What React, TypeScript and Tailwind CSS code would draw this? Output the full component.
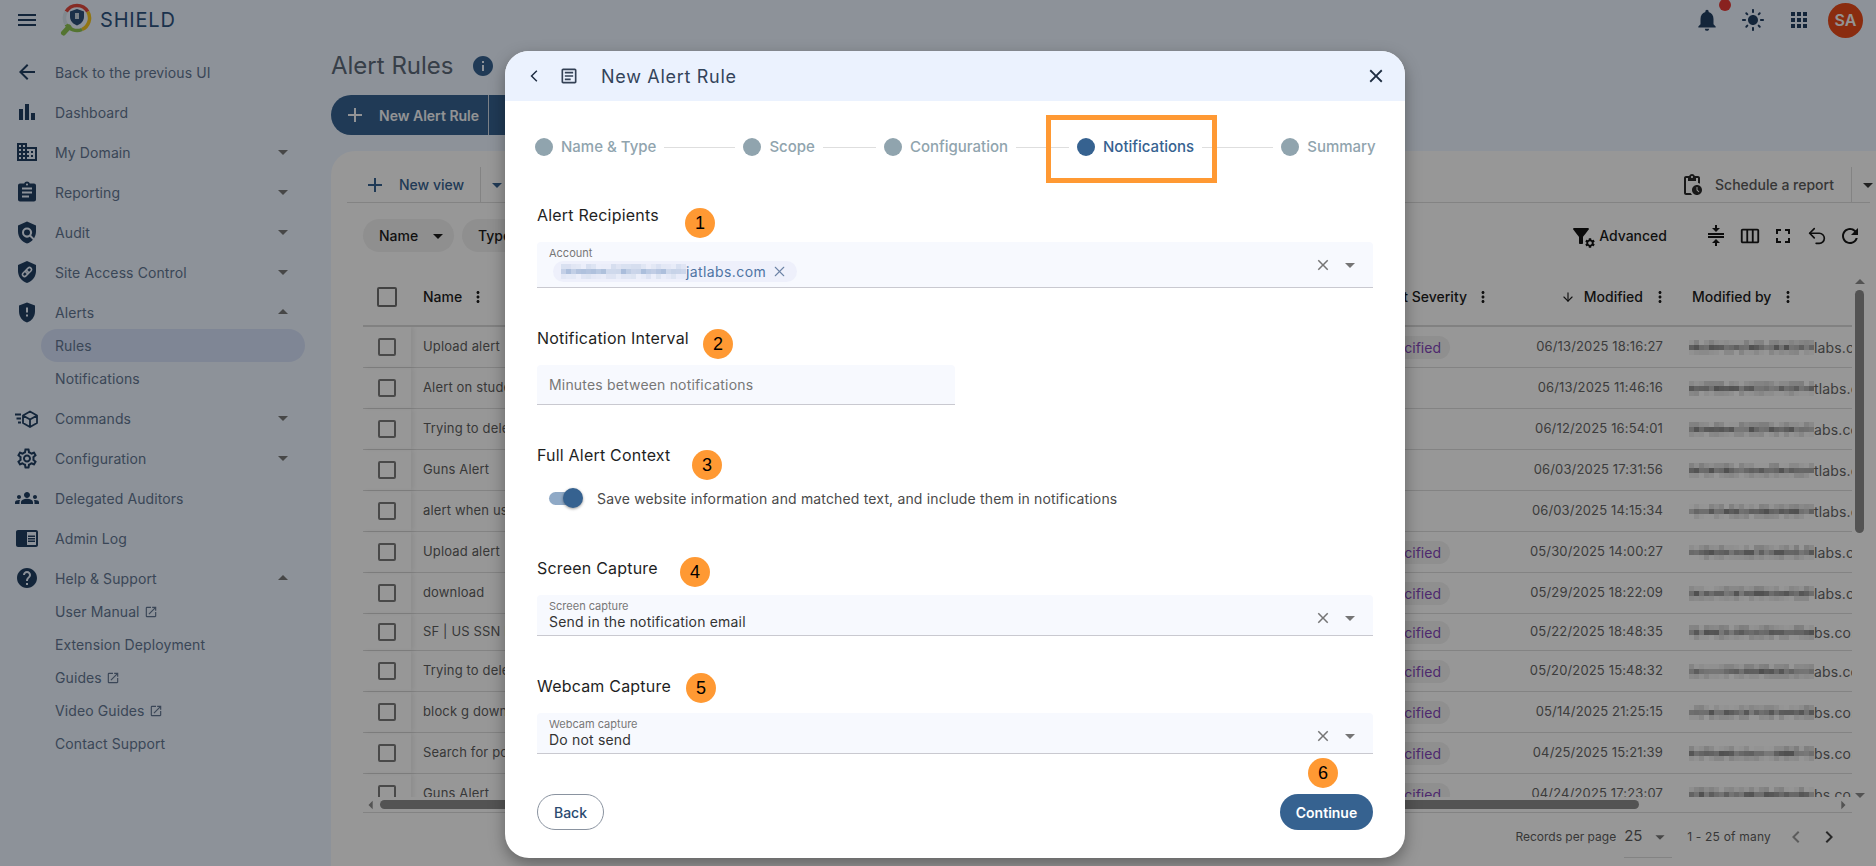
import React from "react";
import {
  MdMenu, MdArrowBack, MdBarChart, MdDomain, MdAssignment, MdPolicy, MdGppMaybe, MdOutlineSettings, MdGroups,
  MdChromeReaderMode, MdHelp, MdOpenInNew, MdNotifications, MdLightMode, MdApps, MdInfo, MdAdd, MdArrowDropDown,
  MdArrowDropUp, MdOutlinePendingActions, MdFilterAlt, MdSettings, MdCompress, MdOutlineViewWeek, MdFullscreen,
  MdRefresh, MdMoreVert, MdClose, MdArrowBackIosNew, MdOutlineArticle, MdChevronLeft, MdChevronRight,
} from "react-icons/md";
import { ArrowDown, Undo2, X } from "lucide-react";

const Logo = () => (
  <svg width="32" height="34" viewBox="0 0 32 34" fill="none">
    <path d="M9 24 L3.5 30" stroke="#8cc152" strokeWidth="5" strokeLinecap="round" />
    <g strokeWidth="3.5">
      <path d="M6.2 8.7A12.5 12.5 0 0 1 27.8 8.7" stroke="#e0483e" />
      <path d="M27.8 8.7A12.5 12.5 0 0 1 22 26.5" stroke="#f2c31f" />
      <path d="M22 26.5A12.5 12.5 0 0 1 6.2 21.3" stroke="#8cc152" />
      <path d="M6.2 21.3A12.5 12.5 0 0 1 6.2 8.7" stroke="#d8e4ee" />
    </g>
    <path d="M17 6l7 2.6v5.2c0 4-3 7.4-7 8.7-4-1.300-7-4.700-7-8.700V8.600z" fill="#2c4f78" />
    <path d="M15 10h4v6h-4z" fill="#c8d4e0" />
  </svg>
);

const SiteAccessIcon = () => (
  <svg width="24" height="24" viewBox="0 0 24 24" fill="currentColor">
    <path d="M12 1L3 5v6c0 5.550 3.840 10.740 9 12 5.160-1.260 9-6.450 9-12V5l-9-4z" />
    <g transform="rotate(-45 12 12)" fill="none" stroke="#ebf3ff" strokeWidth="1.500">
      <rect x="6.500" y="10" width="6.500" height="4" rx="2" />
      <rect x="11" y="10" width="6.500" height="4" rx="2" />
    </g>
  </svg>
);

const CommandsIcon = () => (
  <svg width="24" height="24" viewBox="0 0 24 24" fill="none" stroke="currentColor">
    <path d="M15 5.500l7 4v7.500l-7 4-7-4V9.500zM8 9.500l7 4 7-4M15 13.500V21" strokeWidth="1.800" strokeLinejoin="round" />
    <path d="M0 8.500h6M1.500 12.500h4.500M3 16.500h3" strokeWidth="1.800" />
  </svg>
);

const navItems = [
  { label: "Back to the previous UI", icon: <MdArrowBack size={24} /> },
  { label: "Dashboard", icon: <MdBarChart size={28} /> },
  { label: "My Domain", icon: <MdDomain size={26} />, caret: "down" },
  { label: "Reporting", icon: <MdAssignment size={25} />, caret: "down" },
  { label: "Audit", icon: <MdPolicy size={25} />, caret: "down" },
  { label: "Site Access Control", icon: <SiteAccessIcon />, caret: "down" },
  { label: "Alerts", icon: <MdGppMaybe size={25} />, caret: "up" },
];
const navItems2 = [
  { label: "Commands", icon: <CommandsIcon />, caret: "down" },
  { label: "Configuration", icon: <MdOutlineSettings size={25} />, caret: "down" },
  { label: "Delegated Auditors", icon: <MdGroups size={26} /> },
  { label: "Admin Log", icon: <MdChromeReaderMode size={26} /> },
  { label: "Help & Support", icon: <MdHelp size={24} />, caret: "up" },
];

const NavRow = ({ item }: { item: { label: string; icon: React.ReactNode; caret?: string } }) => (
  <div className="flex h-10 items-center pl-[15px] pr-[36px]">
    <span className="flex w-6 justify-center text-[#213f62]">{item.icon}</span>
    <span className="ml-4 flex-1 text-[14px] tracking-[0.1px] text-[#627691]">{item.label}</span>
    {item.caret === "down" && <MdArrowDropDown size={24} className="text-[#777]" />}
    {item.caret === "up" && <MdArrowDropUp size={24} className="text-[#777]" />}
  </div>
);

const SubRow = ({ label, ext, active }: { label: string; ext?: boolean; active?: boolean }) => (
  <div className={`ml-[41px] mr-[26px] flex h-[33px] items-center rounded-full pl-[14px] text-[14px] tracking-[0.1px] text-[#627691] ${active ? "bg-[#d4e0f9]" : ""}`}>
    {label}
    {ext && <MdOpenInNew size={14} className="ml-[4px]" />}
  </div>
);

const Sidebar = () => (
  <aside className="w-[331px] shrink-0 pt-[12px]">
    {navItems.map((item) => <NavRow key={item.label} item={item} />)}
    <div className="mt-[-3px]">
      <SubRow label="Rules" active />
      <SubRow label="Notifications" />
    </div>
    <div className="h-[3px]" />
    {navItems2.map((item) => <NavRow key={item.label} item={item} />)}
    <div className="mt-[-3px]">
      <SubRow label="User Manual" ext />
      <SubRow label="Extension Deployment" />
      <SubRow label="Guides" ext />
      <SubRow label="Video Guides" ext />
      <SubRow label="Contact Support" />
    </div>
  </aside>
);

// pixelated stand-in for the redacted addresses
const Pixels = ({ seed, width, tone }: { seed: number; width: number; tone: string }) => {
  const cols = Math.floor(width / 5);
  const rows = [0, 1, 2];
  return (
    <span className="inline-flex shrink-0 flex-col">
      {rows.map((r) => (
        <span key={r} className="flex h-[5px]">
          {Array.from({ length: cols }).map((_, c) => {
            const v = Math.abs(Math.sin((c + 1) * 12.9898 + (r + 1) * 78.233 + seed) * 43758.5453) % 1;
            const base = r === 1 ? 0.35 + v * 0.5 : r === 0 ? v * 0.3 : v * 0.22;
            return <span key={c} className="h-[5px] w-[5px]" style={{ backgroundColor: tone, opacity: base }} />;
          })}
        </span>
      ))}
    </span>
  );
};

const rows = [
  { name: "Upload alert", sev: true, date: "06/13/2025 18:16:27", mail: "labs.com", h: "h-[41px]" },
  { name: "Alert on student activity", sev: false, date: "06/13/2025 11:46:16", mail: "tlabs.com", h: "h-[41px]" },
  { name: "Trying to delete extension", sev: false, date: "06/12/2025 16:54:01", mail: "abs.com", h: "h-[41px]" },
  { name: "Guns Alert", sev: false, date: "06/03/2025 17:31:56", mail: "tlabs.com", h: "h-[41px]" },
  { name: "alert when user uploads", sev: false, date: "06/03/2025 14:15:34", mail: "tlabs.com", h: "h-[41px]" },
  { name: "Upload alert", sev: true, date: "05/30/2025 14:00:27", mail: "labs.com", h: "h-[41px]" },
  { name: "download", sev: true, date: "05/29/2025 18:22:09", mail: "labs.com", h: "h-[41px]" },
  { name: "SF | US SSN Exfiltration", sev: true, date: "05/22/2025 18:48:35", mail: "bs.com", h: "h-[37px]" },
  { name: "Trying to delete extension", sev: true, date: "05/20/2025 15:48:32", mail: "abs.com", h: "h-[41px]" },
  { name: "block g download", sev: true, date: "05/14/2025 21:25:15", mail: "bs.com", h: "h-[41px]" },
  { name: "Search for policy", sev: true, date: "04/25/2025 15:21:39", mail: "bs.com", h: "h-[41px]" },
  { name: "Guns Alert", sev: true, date: "04/24/2025 17:23:07", mail: "bs.com", h: "h-[41px]" },
];

const Kebab = () => <MdMoreVert size={18} className="text-[#1c1c1c]" />;

const TableArea = () => (
  <div className="relative">
    <div className="ml-[32px] mr-[24px] flex h-[75px] items-center border-b-2 border-[#d8d8d8] pt-[16px] text-[14px] font-medium text-[#1c1c1c]">
      <div className="flex w-[48px] justify-center">
        <span className="h-5 w-5 rounded-[2px] border-2 border-[#6e6e6e]" />
      </div>
      <div className="flex flex-1 items-center pl-[12px]">
        <span>Name</span>
        <span className="ml-[7px]"><Kebab /></span>
      </div>
      <div className="flex w-[140px] items-center justify-end">
        <span>Alert Severity</span>
        <span className="ml-[7px] mr-[-32px]"><Kebab /></span>
      </div>
      <div className="flex w-[215px] items-center justify-end pr-[6px]">
        <ArrowDown size={14} className="mr-[9px]" />
        <span>Modified</span>
        <span className="ml-[8px]"><Kebab /></span>
      </div>
      <div className="flex w-[177px] items-center pl-[17px]">
        <span>Modified by</span>
        <span className="ml-[8px]"><Kebab /></span>
      </div>
    </div>
    <div className="ml-[32px] mr-[24px] h-[470px] overflow-hidden text-[13px] tracking-[0.15px] text-[#646464]">
      {rows.map((r, i) => (
        <div key={i} className={`flex shrink-0 items-center border-b border-[#dadada] ${r.h}`}>
          <div className="flex h-full w-[48px] items-center justify-center shadow-[3px_0_4px_rgba(0,0,0,0.06)]">
            <span className="h-[18px] w-[18px] rounded-[2px] border-2 border-[#7a7a7a]" />
          </div>
          <div className="flex-1 truncate pl-[12px] text-[#5e5e5e]">{r.name}</div>
          <div className="flex w-[140px] justify-end pr-[10px]">
            {r.sev && (
              <span className="rounded-full bg-[#eeeeee] py-[1px] pl-[12px] pr-[9px] text-[14px] tracking-normal text-[#8246b8]">Unspecified</span>
            )}
          </div>
          <div className="w-[215px] pr-[12px] text-right">{r.date}</div>
          <div className="flex w-[177px] items-center overflow-hidden whitespace-nowrap pl-[14px]">
            <Pixels seed={i * 3 + 1} width={126} tone="#6f6f6f" />
            <span className="text-[14px]">{r.mail}</span>
          </div>
        </div>
      ))}
    </div>
    <div className="ml-[32px] mr-[24px] flex h-[16px] items-center border-b border-[#dadada]">
      <MdArrowDropDown size={20} className="ml-[-2px] rotate-90 text-[#8a8a8a]" />
      <span className="ml-[-1px] h-[9px] w-[1259px] rounded-full bg-[#8a8a8a]" />
      <span className="flex-1" />
      <MdArrowDropDown size={20} className="mr-[-1px] -rotate-90 text-[#8a8a8a]" />
    </div>
    <div className="absolute right-[12px] top-[27px] flex h-[520px] w-[9px] flex-col">
      <span className="mx-auto mb-[2px] h-0 w-0 border-x-[5px] border-b-[5px] border-x-transparent border-b-[#8a8a8a]" />
      <span className="mt-[4px] h-[243px] rounded-full bg-[#8a8a8a]" />
      <span className="flex-1" />
      <span className="mx-auto mb-[1px] h-0 w-0 border-x-[5px] border-t-[5px] border-x-transparent border-t-[#8a8a8a]" />
    </div>
  </div>
);

const Main = () => (
  <main className="min-w-0 flex-1">
    <div className="flex h-[50px] items-center pt-[1px]">
      <h1 className="text-[24px] font-normal text-[#5c6978]">Alert Rules</h1>
      <MdInfo size={24} className="ml-[18px] text-[#366290]" />
    </div>
    <div className="mt-[5px] flex h-10 w-[300px] items-center rounded-l-full bg-[#366290] text-[14px] font-semibold text-[#f4f6f9]">
      <MdAdd size={24} className="ml-[12px]" />
      <span className="ml-[12px]">New Alert Rule</span>
      <span className="ml-[9px] h-10 w-px bg-[#cfd8e3]" />
    </div>
    <section className="mt-[16px] h-[715px] rounded-tl-[24px] bg-[#fcfcfc]">
      <div className="ml-[16px] mr-[6px] flex h-[52px] items-center border-b border-[#dadada] pt-[16px] text-[14px]">
        <MdAdd size={24} className="ml-[16px] text-[#366290]" />
        <span className="ml-[12px] font-medium text-[#366290]">New view</span>
        <span className="ml-[16px] h-full w-px bg-[#dadada]" />
        <MdArrowDropDown size={24} className="ml-[4px] text-[#366290]" />
        <span className="flex-1" />
        <MdOutlinePendingActions size={24} className="text-[#2b2b2b]" />
        <span className="ml-[11px] font-medium text-[#5a5a5a]">Schedule a report</span>
        <span className="ml-[17px] h-full w-px bg-[#dadada]" />
        <MdArrowDropDown size={24} className="ml-[4px] mr-[-10px] text-[#3a3a3a]" />
      </div>
      <div className="mt-[16px] flex h-[33px] items-center text-[14px] font-medium text-[#1c1c1c]">
        <div className="ml-[32px] flex h-full w-[91px] items-center rounded-full bg-[#eeeeee] pl-[16px]">
          Name
          <MdArrowDropDown size={24} className="ml-[8px]" />
        </div>
        <div className="ml-[8px] flex h-full w-[100px] items-center rounded-full bg-[#eeeeee] pl-[16px]">Type</div>
        <span className="flex-1" />
        <span className="relative h-6 w-6 text-[#111]">
          <MdFilterAlt size={24} />
          <MdSettings size={12} className="absolute bottom-[-1px] right-[-3px]" />
        </span>
        <span className="ml-[6px]">Advanced</span>
        <span className="ml-[37px] flex items-center gap-[9.5px] pr-[14px] text-[#161616]">
          <MdCompress size={24} />
          <MdOutlineViewWeek size={22} className="mx-[1px]" />
          <MdFullscreen size={24} />
          <Undo2 size={22} strokeWidth={1.8} className="mx-[1px]" />
          <MdRefresh size={24} />
        </span>
      </div>
      <TableArea />
      <div className="flex h-[45px] items-center justify-end pr-[35px] pt-[3px] text-[12px] text-[#5c5c5c]">
        <span>Records per page</span>
        <div className="relative ml-[8px] flex h-[42px] w-[48px] items-center border-b border-[#dadada] text-[15px]">
          25
          <MdArrowDropDown size={22} className="absolute right-[1px] text-[#777]" />
        </div>
        <span className="ml-[15px] tracking-[0.2px]">1 - 25 of many</span>
        <MdChevronLeft size={24} className="ml-[13px] text-[#999]" />
        <MdChevronRight size={24} className="ml-[9px] text-[#444]" />
      </div>
    </section>
  </main>
);

const steps = [
  { label: "Name & Type", line: "w-[71px]" },
  { label: "Scope", line: "w-[53px]" },
  { label: "Configuration", line: "w-[53px]" },
  { label: "Notifications", line: "w-[71px]", active: true },
  { label: "Summary" },
];

const badges = [
  { n: 1, pos: "left-[180px] top-[157px]" },
  { n: 2, pos: "left-[198px] top-[278px]" },
  { n: 3, pos: "left-[187px] top-[399px]" },
  { n: 4, pos: "left-[175px] top-[506px]" },
  { n: 5, pos: "left-[181px] top-[622px]" },
  { n: 6, pos: "left-[803px] top-[707px]" },
];

const SectionTitle = ({ children, className }: { children: React.ReactNode; className: string }) => (
  <div className={`flex h-5 items-center text-[16px] tracking-[0.2px] text-[#1f1f1f] ${className}`}>{children}</div>
);

const FieldActions = () => (
  <span className="absolute right-[11px] top-[11px] flex items-center text-[#757575]">
    <MdClose size={18} />
    <MdArrowDropDown size={24} className="ml-[6px]" />
  </span>
);

const SelectField = ({ label, value }: { label: string; value: string }) => (
  <div className="relative mt-[17px] h-[41px] rounded-t-[4px] border-b border-[#c9c9d0] bg-[#f7f9fe] pl-[12px] pt-[5px]">
    <div className="text-[11px] leading-[13px] text-[#777]">{label}</div>
    <div className="text-[14px] leading-[17px] tracking-[0.18px] text-[#333]">{value}</div>
    <FieldActions />
  </div>
);

const Modal = () => (
  <div className="relative flex h-[807px] w-[900px] flex-col overflow-hidden rounded-[24px] bg-white shadow-[0_6px_16px_rgba(0,0,0,0.35)]">
    <header className="flex h-[50px] shrink-0 items-center bg-[#ebf2fe] text-[#1e2d42]">
      <MdArrowBackIosNew size={14} className="ml-[22px]" />
      <MdOutlineArticle size={20} className="ml-[18px] text-[#334155]" />
      <h2 className="ml-[22px] flex-1 text-[18px] font-normal tracking-[0.7px] text-[#33445a]">New Alert Rule</h2>
      <MdClose size={22} className="mr-[18px]" />
    </header>
    <div className="flex h-[92px] shrink-0 items-center pl-[30px] text-[15px] font-medium">
      {steps.map((s) => (
        <React.Fragment key={s.label}>
          <span className={`h-[18px] w-[18px] rounded-full ${s.active ? "bg-[#366290]" : "bg-[#90a4ae]"}`} />
          <span className={`ml-[8px] ${s.active ? "text-[#366290]" : "text-[#90a4ae]"}`}>{s.label}</span>
          {s.line && <span className={`mx-[8px] h-px bg-[#dedede] ${s.line}`} />}
        </React.Fragment>
      ))}
    </div>
    <div className="flex flex-1 flex-col px-[32px]">
      <SectionTitle className="mt-[12px]">Alert Recipients</SectionTitle>
      <div className="relative mt-[17px] h-[46px] rounded-t-[4px] border-b border-[#c9c9d0] bg-[#f7f9fe] pl-[12px] pt-[5px]">
        <div className="text-[11px] leading-[13px] text-[#777]">Account</div>
        <div className="ml-[4px] mt-[1px] flex h-[21px] w-[244px] items-center rounded-full bg-[#eef0fb] pl-[8px] text-[14px] text-[#4f74a3]">
          <Pixels seed={7} width={125} tone="#9db3d4" />
          <span className="tracking-[0.4px]">jatlabs.com</span>
          <X size={17} strokeWidth={1.5} className="ml-[5px] text-[#6c84a6]" />
        </div>
        <FieldActions />
      </div>
      <SectionTitle className="mt-[40px]">Notification Interval</SectionTitle>
      <div className="mt-[17px] flex h-10 w-[418px] items-center rounded-t-[4px] border-b border-[#c9c9d0] bg-[#f7f9fe] pl-[12px] text-[14px] tracking-[0.18px] text-[#777]">
        Minutes between notifications
      </div>
      <SectionTitle className="mt-[40px]">Full Alert Context</SectionTitle>
      <div className="ml-[12px] mt-[23px] flex h-5 items-center">
        <span className="relative h-[13px] w-[33px] rounded-full bg-[#8fa9c6]">
          <span className="absolute right-[-1px] top-[-3.5px] h-5 w-5 rounded-full bg-[#366290] shadow-[0_1px_3px_rgba(0,0,0,0.4)]" />
        </span>
        <span className="ml-[15px] text-[14px] tracking-[0.16px] text-[#4a4a4a]">
          Save website information and matched text, and include them in notifications
        </span>
      </div>
      <SectionTitle className="mt-[50px]">Screen Capture</SectionTitle>
      <SelectField label="Screen capture" value="Send in the notification email" />
      <SectionTitle className="mt-[40px]">Webcam Capture</SectionTitle>
      <SelectField label="Webcam capture" value="Do not send" />
      <div className="mt-[40px] flex justify-between text-[14px] font-medium">
        <button className="h-9 w-[67px] rounded-full border border-[#8a93a0] text-[#2a4a70]">Back</button>
        <button className="h-9 w-[93px] rounded-full bg-[#366290] font-semibold text-white">Continue</button>
      </div>
    </div>
    {badges.map((b) => (
      <span key={b.n} className={`absolute flex h-[30px] w-[30px] items-center justify-center rounded-full bg-[#ff9933] font-['Liberation_Sans',sans-serif] text-[18px] text-black ${b.pos}`}>
        {b.n}
      </span>
    ))}
    <div className="absolute left-[541px] top-[64px] h-[68px] w-[171px] border-[5px] border-[#ff9933]" />
  </div>
);

export default function App() {
  return (
    <div className="relative h-[866px] w-[1876px] overflow-hidden bg-[#ebf3ff] font-['Inter',sans-serif]">
      <div className="flex h-10 items-center text-[#213f62]">
        <MdMenu size={24} className="ml-[15px]" />
        <span className="ml-[21px]"><Logo /></span>
        <span className="ml-[8px] flex-1 text-[20px] tracking-[0.8px] text-[#2e5480]">SHIELD</span>
        <span className="relative mr-[21px]">
          <MdNotifications size={26} />
          <span className="absolute right-[-11px] top-[-8px] h-3 w-3 rounded-full bg-[#e53935]" />
        </span>
        <MdLightMode size={24} className="mr-[22px]" />
        <MdApps size={24} className="mr-[17px]" />
        <span className="mr-[13px] flex h-[35px] w-[35px] items-center justify-center rounded-full bg-[#e64a19] text-[16px] font-semibold text-[#f5f5f5]">SA</span>
      </div>
      <div className="flex h-[826px]">
        <Sidebar />
        <Main />
      </div>
      <div className="absolute inset-0 bg-black/40 pl-[505px] pt-[51px]">
        <Modal />
      </div>
    </div>
  );
}
